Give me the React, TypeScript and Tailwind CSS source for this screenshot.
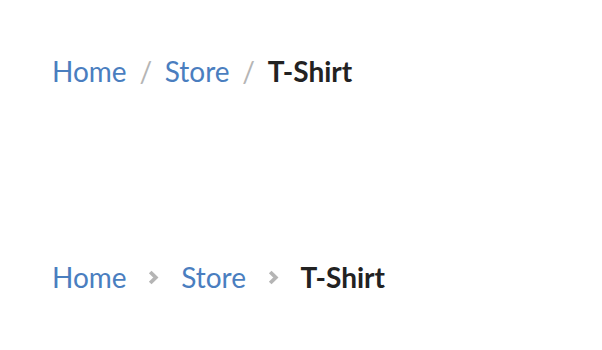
function Chevron() {
  return (
    <svg width="11" height="15" viewBox="0 0 11 15" className="text-[#b5b5b5]">
      <path d="M2.2 2 L7.8 7.5 L2.2 13" fill="none" stroke="currentColor" strokeWidth="3.8" />
    </svg>
  );
}

function Slash() {
  return <span className="text-[#b5b5b5]">/</span>;
}

export default function App() {
  const items = ["Home", "Store"];
  return (
    <div className="w-[602px] h-[350px] bg-white font-['Lato',sans-serif] text-[28px] flex flex-col gap-[168px] pt-[52px] pl-[52px]">
      <nav className="flex items-center gap-[12.75px] leading-none h-[38px]">
        {items.map((item) => (
          <div key={item} className="flex items-center gap-[12.75px]">
            <a className="text-[#4a7ebf]">{item}</a>
            <Slash />
          </div>
        ))}
        <span className="font-bold text-[#222]">T-Shirt</span>
      </nav>
      <nav className="flex items-center gap-[21.75px] leading-none h-[38px]">
        {items.map((item) => (
          <div key={item} className="flex items-center gap-[21.75px]">
            <a className="text-[#4a7ebf]">{item}</a>
            <Chevron />
          </div>
        ))}
        <span className="font-bold text-[#222]">T-Shirt</span>
      </nav>
    </div>
  );
}
